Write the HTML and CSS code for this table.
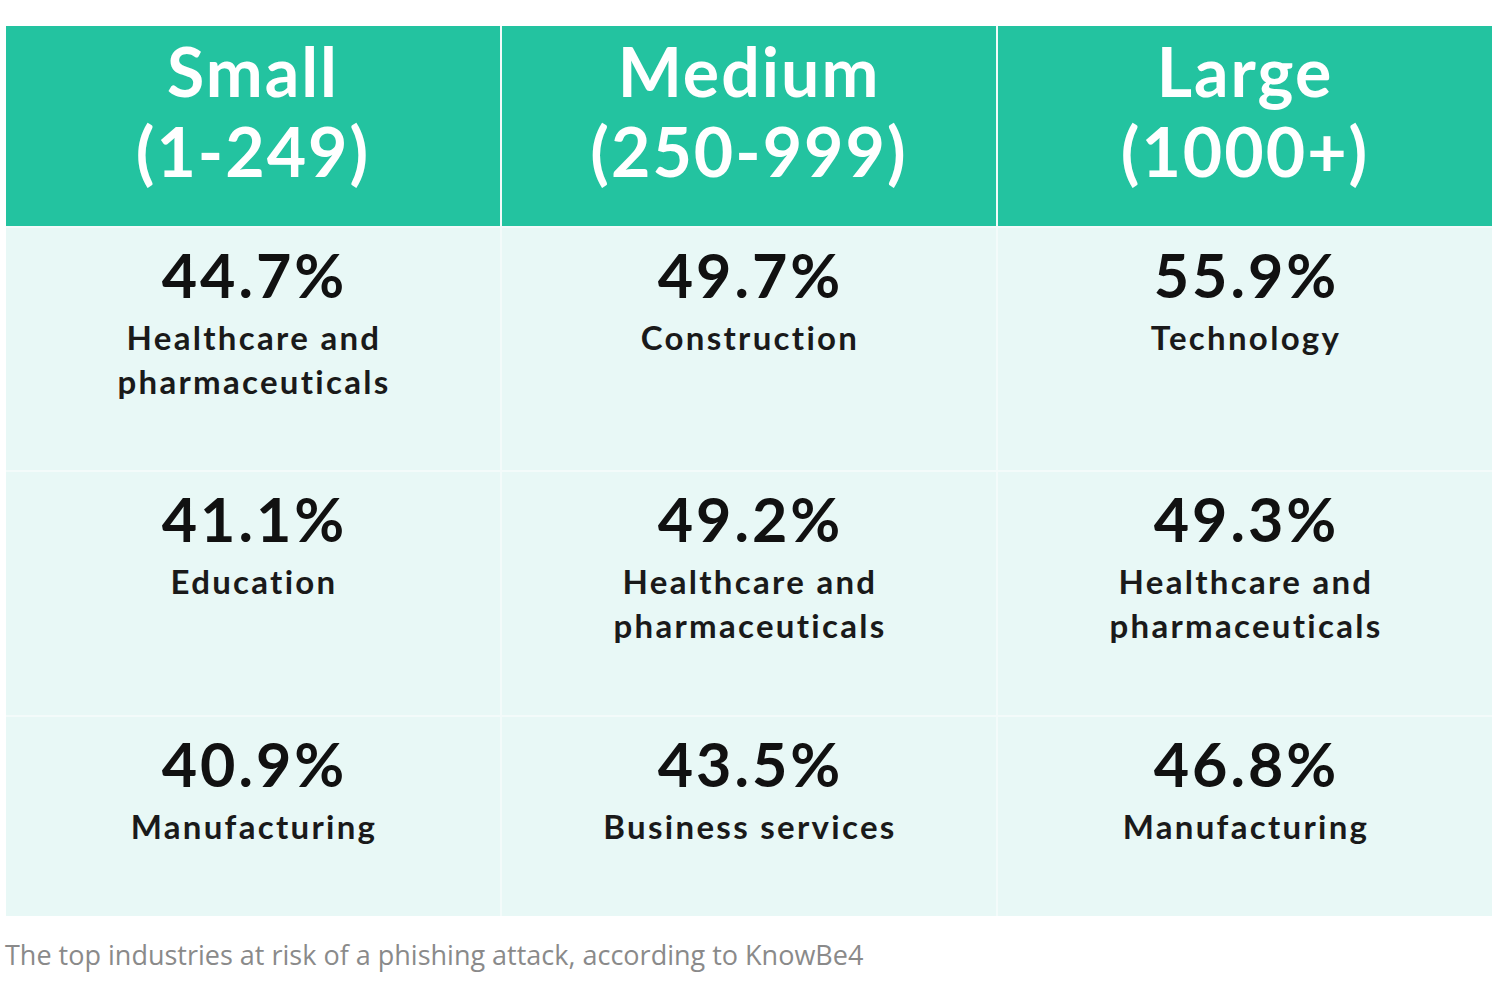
FILE: index.html
```
<!DOCTYPE html>
<html>
<head>
<meta charset="utf-8">
<link rel="stylesheet" href="styles.css">
</head>
<body>
<div class="figure">
  <div class="table">
    <div class="head">Small<br>(1-249)</div>
    <div class="head">Medium<br>(250-999)</div>
    <div class="head">Large<br>(1000+)</div>

    <div class="cell"><div class="num">44.7%</div><div class="label">Healthcare and<br>pharmaceuticals</div></div>
    <div class="cell"><div class="num">49.7%</div><div class="label">Construction</div></div>
    <div class="cell"><div class="num">55.9%</div><div class="label">Technology</div></div>

    <div class="cell"><div class="num">41.1%</div><div class="label">Education</div></div>
    <div class="cell"><div class="num">49.2%</div><div class="label">Healthcare and<br>pharmaceuticals</div></div>
    <div class="cell"><div class="num">49.3%</div><div class="label">Healthcare and<br>pharmaceuticals</div></div>

    <div class="cell last"><div class="num">40.9%</div><div class="label">Manufacturing</div></div>
    <div class="cell last"><div class="num">43.5%</div><div class="label">Business services</div></div>
    <div class="cell last"><div class="num">46.8%</div><div class="label">Manufacturing</div></div>
  </div>
  <p class="caption">The top industries at risk of a phishing attack, according to KnowBe4</p>
</div>
</body>
</html>
```
FILE: styles.css
```
html, body {
  margin: 0;
  padding: 0;
  background: #ffffff;
}

.figure {
  padding: 26px 0 0 6px;
  width: 1486px;
}

.table {
  display: grid;
  grid-template-columns: 494px 494px 494px;
  grid-template-rows: 200px 242px 243px 199px;
  gap: 2px;
  background: #f3fbfa;
  width: 1486px;
}

.head {
  background: #23c3a0;
  color: #ffffff;
  font-family: Lato, "Noto Sans", sans-serif;
  font-weight: 700;
  font-size: 68px;
  line-height: 80px;
  letter-spacing: 2px;
  text-align: center;
  padding-top: 5px;
}

.cell {
  background: #e8f8f6;
  text-align: center;
  padding-top: 17px;
  color: #111111;
  font-family: Lato, "Noto Sans", sans-serif;
}

.num {
  font-weight: 700;
  font-size: 61px;
  line-height: 60px;
  letter-spacing: 3px;
  padding-left: 3px;
}

.label {
  margin-top: 10px;
  font-weight: 700;
  font-size: 33px;
  line-height: 44px;
  letter-spacing: 2.3px;
  padding-left: 2px;
  color: #1a1a1a;
}

.caption {
  margin: 20px 0 0 -1px;
  font-family: "Open Sans", sans-serif;
  font-size: 27px;
  letter-spacing: 0;
  color: #8a8a8a;
}
```
